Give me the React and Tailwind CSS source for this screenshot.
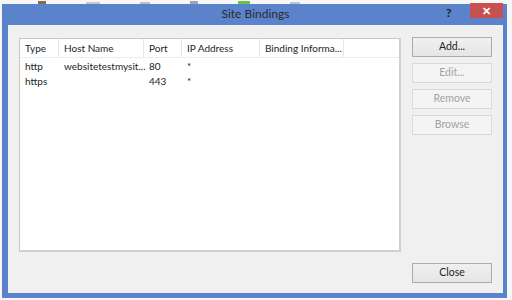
import React from 'react';

const font = { fontFamily: 'Lato, "Liberation Sans", sans-serif' };

function Btn({ label, disabled }) {
  return (
    <div
      className={`h-[20px] w-[80px] flex items-center justify-center text-[10.5px] border ${
        disabled
          ? 'border-[#d9d9d9] bg-[#f4f4f4] text-[#a3a3a3]'
          : 'border-[#acacac] bg-gradient-to-b from-[#f0f0f0] to-[#e5e5e5] text-[#1e1e1e]'
      }`}
    >
      {label}
    </div>
  );
}

export default function App() {
  const cols = [
    { name: 'Type', w: 'w-[39px]' },
    { name: 'Host Name', w: 'w-[85px]' },
    { name: 'Port', w: 'w-[38px]' },
    { name: 'IP Address', w: 'w-[78px]' },
    { name: 'Binding Informa...', w: 'w-[84px]' },
  ];
  const rows = [
    ['http', 'websitetestmysit...', '80', '*'],
    ['https', '', '443', '*'],
  ];

  return (
    <div className="w-[512px] h-[300px] bg-[#f7f7f7] overflow-hidden" style={font}>
      {/* strip of the desktop behind the dialog */}
      <div className="h-[4px] flex items-end gap-[40px] pl-[38px]">
        <div className="w-[8px] h-[3px] bg-[#8a6a4a]" />
        <div className="w-[14px] h-[2px] bg-[#c8c8c8]" />
        <div className="w-[10px] h-[2px] bg-[#bfbfbf]" />
        <div className="w-[8px] h-[3px] bg-[#9aa6b8]" />
        <div className="w-[12px] h-[3px] bg-[#6cc24a]" />
        <div className="w-[10px] h-[2px] bg-[#b8c4d4]" />
      </div>

      <div className="ml-[2px] w-[505px] h-[294px] flex flex-col bg-[#5b83cc] border-l-[6px] border-r-[4px] border-b-[5px] border-[#5b83cc]">
        {/* title bar */}
        <div className="h-[21px] flex items-start shrink-0 pl-[57px]">
          <div className="flex-1 text-center text-[12px] leading-[19px] text-[#2b2b2b]">
            Site Bindings
          </div>
          <div className="w-[12px] text-[12px] leading-[16px] font-bold text-[#1a1a1a] mr-[12px] mt-[1px]">?</div>
          <div className="w-[33px] h-[15px] -mt-[1px] bg-[#c75050] flex items-center justify-center text-white text-[11px] font-bold leading-none">
            ✕
          </div>
        </div>

        {/* client area */}
        <div className="flex-1 bg-[#f0f0f0] flex pt-[12px] pl-[11px] pr-[11px] pb-[10px] gap-[11px]">
          <div className="w-[382px] h-[214px] mt-[1px] bg-white border border-[#c8c8c8] border-r-2 border-b-2 border-r-[#cfcfcf] border-b-[#cfcfcf] text-[10px] text-[#1e1e1e]">
            <div className="h-[19px] flex border-b border-[#e8eef6]">
              {cols.map((c) => (
                <div
                  key={c.name}
                  className={`${c.w} pl-[5px] leading-[18px] border-r border-[#e4e8ee] whitespace-nowrap`}
                >
                  {c.name}
                </div>
              ))}
            </div>
            <div className="pt-[1px]">
              {rows.map((r) => (
                <div key={r[0]} className="flex h-[15px] leading-[15px]">
                  <div className="w-[39px] pl-[5px]">{r[0]}</div>
                  <div className="w-[85px] pl-[5px] whitespace-nowrap">{r[1]}</div>
                  <div className="w-[38px] pl-[5px]">{r[2]}</div>
                  <div className="w-[78px] pl-[5px]">{r[3]}</div>
                </div>
              ))}
            </div>
          </div>

          <div className="w-[80px] flex flex-col justify-between">
            <div className="flex flex-col gap-[6px]">
              <Btn label="Add..." />
              <Btn label="Edit..." disabled />
              <Btn label="Remove" disabled />
              <Btn label="Browse" disabled />
            </div>
            <Btn label="Close" />
          </div>
        </div>
      </div>
    </div>
  );
}
